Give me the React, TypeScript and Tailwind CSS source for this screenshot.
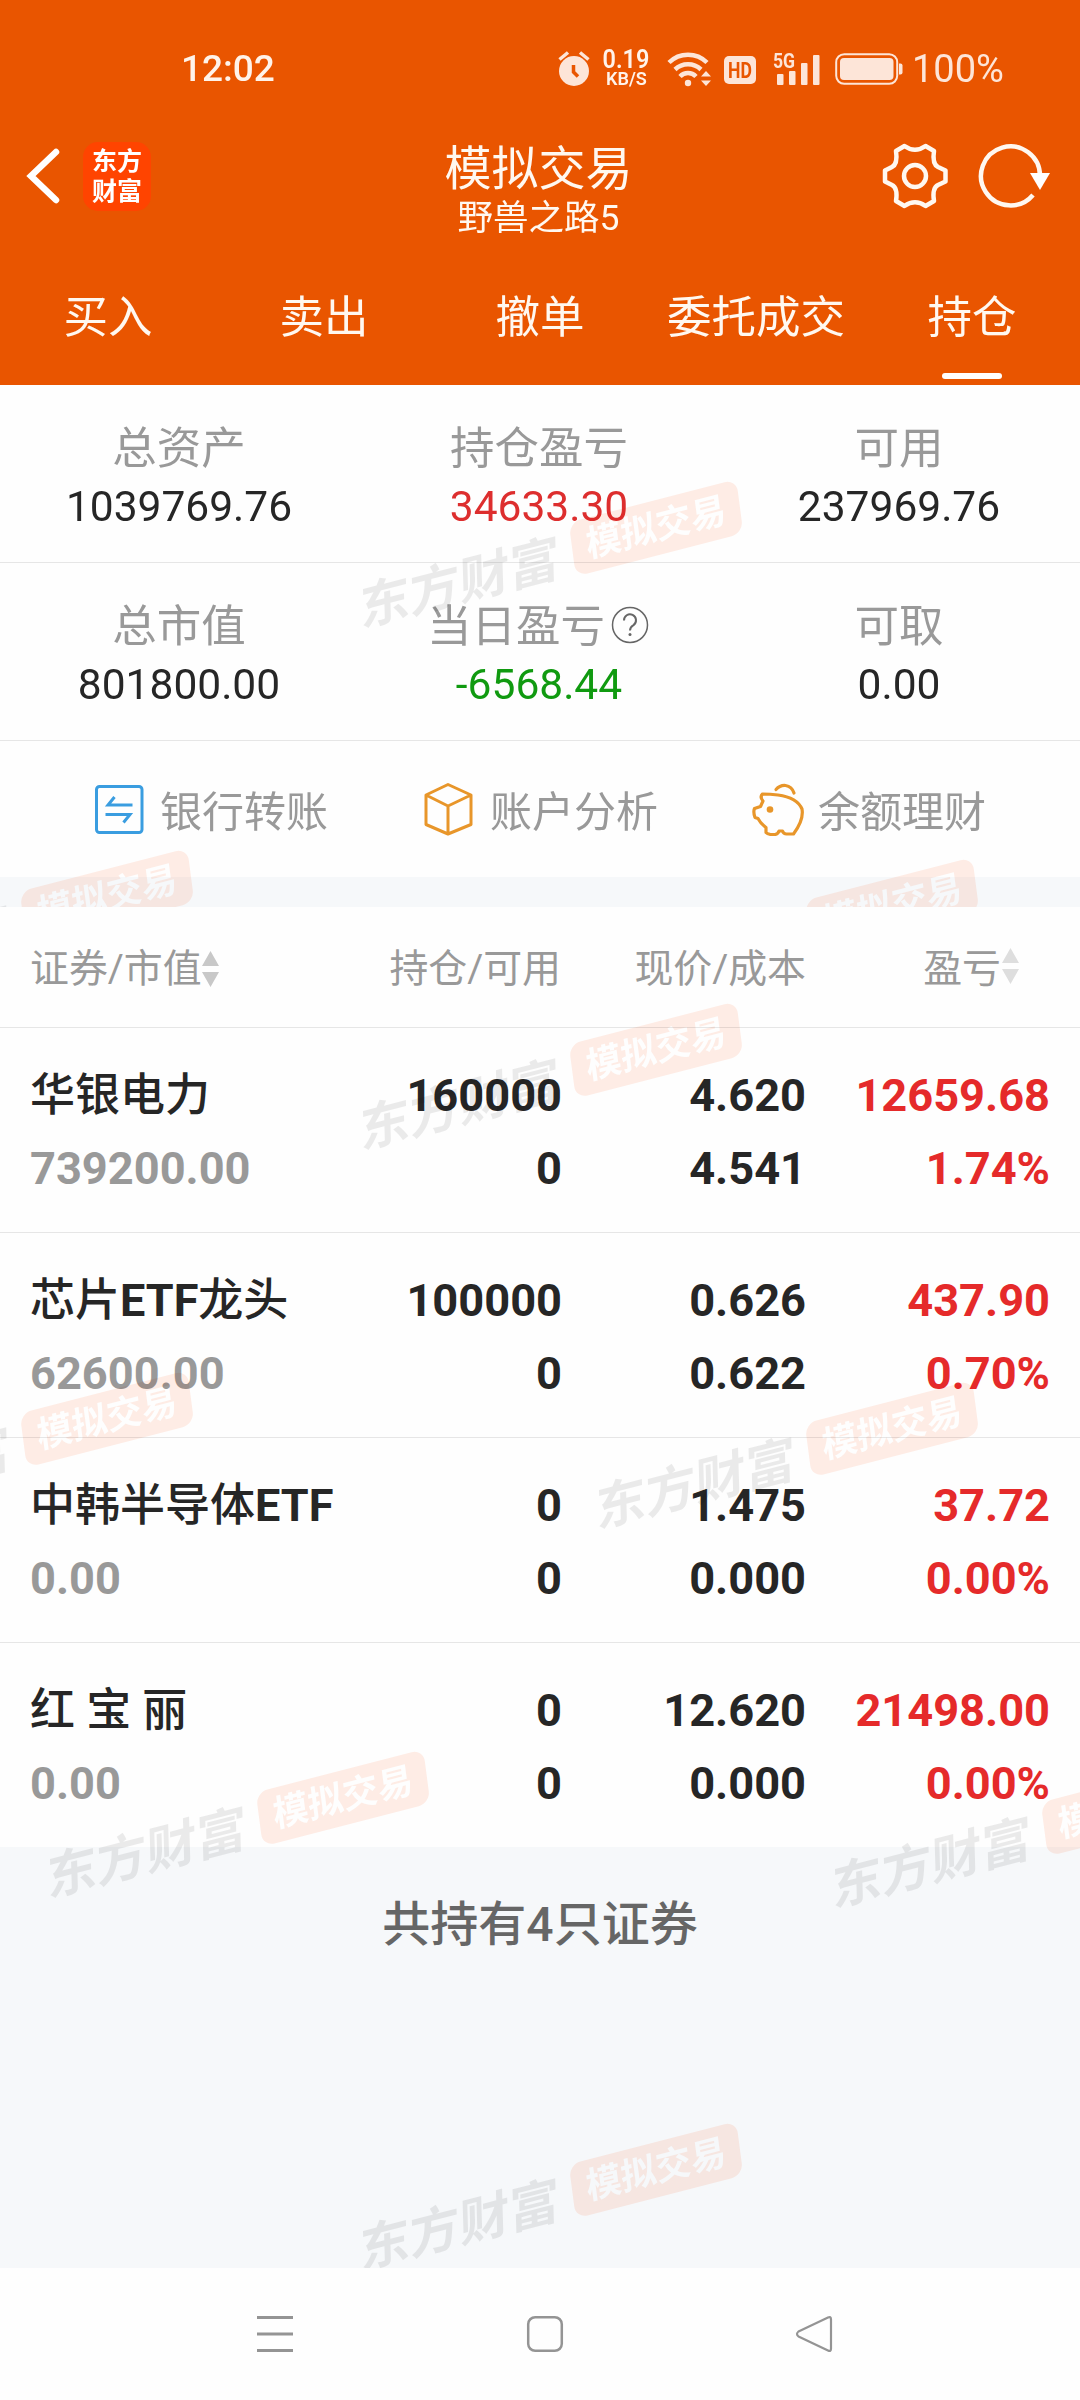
const tabs = ['买入', '卖出', '撤单', '委托成交', '持仓'];

const stats = [
  [
    { label: '总资产', value: '1039769.76', color: 'text-[#262626]' },
    { label: '持仓盈亏', value: '34633.30', color: 'text-[#dd2e2e]' },
    { label: '可用', value: '237969.76', color: 'text-[#262626]' },
  ],
  [
    { label: '总市值', value: '801800.00', color: 'text-[#262626]' },
    { label: '当日盈亏', value: '-6568.44', color: 'text-[#109a10]', help: true },
    { label: '可取', value: '0.00', color: 'text-[#262626]' },
  ],
];

const holdings = [
  { name: '华银电力', market: '739200.00', amount: '160000', usable: '0', price: '4.620', cost: '4.541', profit: '12659.68', rate: '1.74%' },
  { name: '芯片ETF龙头', market: '62600.00', amount: '100000', usable: '0', price: '0.626', cost: '0.622', profit: '437.90', rate: '0.70%' },
  { name: '中韩半导体ETF', market: '0.00', amount: '0', usable: '0', price: '1.475', cost: '0.000', profit: '37.72', rate: '0.00%' },
  { name: '红 宝 丽', market: '0.00', amount: '0', usable: '0', price: '12.620', cost: '0.000', profit: '21498.00', rate: '0.00%' },
];

// centre points, relative to the panel that holds them
const summaryMarks = [
  { x: 551, y: 170 },
  { x: 2, y: 539 },
  { x: 787, y: 539 + 9 },
];

const listMarks = [
  { x: 551, y: 170 },
  { x: 2, y: 539 },
  { x: 787, y: 549 },
  { x: 238, y: 918 },
  { x: 1023, y: 928 },
  { x: 551, y: 1290 },
];

function Watermarks({ marks }: { marks: { x: number; y: number }[] }) {
  return (
    <div className="pointer-events-none absolute inset-0 overflow-hidden mix-blend-multiply">
      {marks.map((mark) => (
        <div
          key={`${mark.x}-${mark.y}`}
          className="absolute w-[390px] -translate-x-1/2 -translate-y-1/2"
          style={{ left: mark.x, top: mark.y }}
        >
          <div className="flex items-center justify-between [transform:rotate(-14.5deg)_skewX(-7deg)]">
            <span className="mt-[10px] -ml-[3px] origin-left text-[50px] leading-[54px] font-bold whitespace-nowrap text-black/8 [transform:skewX(-6deg)_scaleX(1.03)]">
              东方财富
            </span>
            <span className="flex h-[54px] w-[173px] items-center justify-center rounded-[12px] bg-[#ff5a1e]/11 text-[36px] leading-[54px] font-bold text-white">
              模拟交易
            </span>
          </div>
        </div>
      ))}
    </div>
  );
}

function StatusBar() {
  return (
    <div className="flex h-[138px] items-center pl-[181px] text-[#fff3ea]">
      <span className="w-[377px] text-[37px] font-medium">12:02</span>
      <svg className="h-[36px] w-[32px]" viewBox="0 0 32 36" fill="none">
        <circle cx="16" cy="20" r="15" fill="#fde5d8" />
        <path d="M1.500 8.500l8.500-7M30.500 8.500l-8.500-7" stroke="#fde5d8" strokeWidth="3.500" />
        <path d="M15.500 14v7l4.500 4.500" stroke="#e95500" strokeWidth="3.500" />
      </svg>
      <div className="ml-[12px] flex w-[48px] flex-col items-center font-semibold">
        <span className="origin-bottom scale-x-90 text-[26px] leading-[20px]">0.19</span>
        <span className="scale-x-95 text-[19px] leading-[20px]">KB/S</span>
      </div>
      <svg className="ml-[17px] h-[36px] w-[46px]" viewBox="0 0 46 36" fill="none">
        <path d="M2 11.500a27 27 0 0 1 38 0" stroke="#fde5d8" strokeWidth="4.500" />
        <path d="M8 18.500a19 19 0 0 1 26 0" stroke="#fde5d8" strokeWidth="4.500" />
        <path d="M13 25.500a11 11 0 0 1 16 0" stroke="#fde5d8" strokeWidth="4.500" />
        <circle cx="21" cy="32" r="3.200" fill="#fde5d8" />
        <path d="M39 20l5 5.500H34zM39 35l5-5.500H34z" fill="#fde5d8" />
      </svg>
      <span className="mt-[2px] ml-[11px] flex h-[28px] w-[32px] items-center justify-center rounded-[5px] bg-[#fde5d8] text-[22px] font-bold text-[#e95500]">
        <span className="scale-x-80">HD</span>
      </span>
      <div className="ml-[17px] flex h-[33px] w-[47px] items-start">
        <span className="-mt-[2px] w-0 text-[20px] leading-[20px] font-bold text-[#fde5d8]">
          <span className="inline-block origin-left scale-x-88">5G</span>
        </span>
        <svg className="h-[33px] w-[47px]" viewBox="0 0 47 33" fill="#fde5d8">
          <rect x="4" y="21" width="6.500" height="11" rx="1" />
          <rect x="16" y="18" width="6.500" height="14" rx="1" />
          <rect x="28" y="10" width="6.500" height="22" rx="1" />
          <rect x="40" y="2" width="6.500" height="30" rx="1" />
        </svg>
      </div>
      <svg className="ml-[15px] h-[32px] w-[68px]" viewBox="0 0 68 32" fill="none">
        <rect x="1.200" y="1.200" width="61" height="29.600" rx="8" stroke="#fde5d8" strokeWidth="2" />
        <rect x="5" y="5" width="53.500" height="22" rx="4" fill="#fde5d8" />
        <path d="M64 10.500h1.500q2 0 2 2v7q0 2-2 2H64z" fill="#fde5d8" />
      </svg>
      <span className="ml-[9px] text-[38px] text-[#fde5d8]">100%</span>
    </div>
  );
}

function Header() {
  return (
    <header className="flex h-[385px] flex-col bg-[#e95500] text-[#fff8f0]">
      <StatusBar />
      <div className="flex h-[111px] justify-between pr-[28px] pl-[25px]">
        <div className="flex w-[200px] pt-[4px]">
          <svg className="mt-[6px] h-[56px] w-[36px]" viewBox="0 0 36 56" fill="none">
            <path d="M31 4L6 28l25 24" stroke="#fff" strokeWidth="6.500" strokeLinecap="round" />
          </svg>
          <div className="ml-[22px] flex h-[69px] w-[68px] flex-col items-center justify-center rounded-[15px] bg-[#ff4400] text-[25px] leading-[30px] font-bold text-white">
            <span>东方</span>
            <span>财富</span>
          </div>
        </div>
        <div className="flex flex-col items-center pt-[2px]">
          <h1 className="text-[47px] leading-[58px]">模拟交易</h1>
          <p className="text-[35.500px] leading-[40px]">野兽之路5</p>
        </div>
        <div className="flex w-[200px] justify-end pt-[4px]">
          <svg className="h-[68px] w-[68px]" viewBox="0 0 68 68" fill="none" stroke="#fff8f0" strokeWidth="4.500" strokeLinejoin="round">
            <path d="M22.500 4L14 9Q16 22 10 25L3 28.500V39.500L10 43Q16 46 14 59L22.500 64Q33 56.500 43.500 64L52 59Q50 46 56 43L63.500 39.500V28.500L56 25Q50 22 52 9L43.500 4Q33 11.500 22.500 4Z" />
            <circle cx="33" cy="34" r="11" />
          </svg>
          <svg className="ml-[28px] h-[68px] w-[74px]" viewBox="0 0 74 68" fill="none">
            <path d="M62 34A29.500 29.500 0 1 0 55 53" stroke="#fff8f0" strokeWidth="4.500" />
            <path d="M52 31h20L62 48z" fill="#fff" />
          </svg>
        </div>
      </div>
      <nav className="grid flex-1 grid-cols-5">
        {tabs.map((tab) => (
          <div key={tab} className="flex flex-col items-center justify-between pb-[6px] text-[44.500px]">
            <span className="mt-[36px] leading-[66px]">{tab}</span>
            {tab === '持仓' && <span className="h-[6px] w-[60px] rounded-full bg-white" />}
          </div>
        ))}
      </nav>
    </header>
  );
}

function Summary() {
  return (
    <section className="relative flex h-[522px] flex-col bg-[#fefefe]">
      {stats.map((row, i) => (
        <div key={i} className="grid h-[178px] grid-cols-3 border-b border-[#e6e6e6] pt-[34px] text-center">
          {row.map((item) => (
            <div key={item.label} className="-ml-[2px]">
              <div className="flex h-[60px] items-center justify-center text-[44.500px] leading-[60px] text-[#999]">
                {item.label}
                {item.help && (
                  <svg className="mr-[2px] mb-[5px] ml-[6px] h-[38px] w-[38px]" viewBox="0 0 38 38" fill="none" stroke="#666">
                    <circle cx="19" cy="19" r="17.500" strokeWidth="1.500" />
                    <path d="M13 14.500a6 6 0 1 1 9.500 4.600q-3.500 2-3.500 5.400" strokeWidth="2" />
                    <circle cx="19" cy="28.500" r="1.500" fill="#666" stroke="none" />
                  </svg>
                )}
              </div>
              <div className={`text-[42.500px] leading-[56px] ${item.color}`}>{item.value}</div>
            </div>
          ))}
        </div>
      ))}
      <div className="flex h-[136px] items-center text-[42px] text-[#999]">
        <div className="flex w-[329px] items-center pl-[94px]">
          <svg className="mr-[16px] h-[50px] w-[50px] shrink-0" viewBox="0 0 50 50" fill="none" stroke="#3a9de0" strokeWidth="3">
            <rect x="2.500" y="2.500" width="45.500" height="46" rx="3" />
            <path d="M38.500 21H14l6.500-8M11.500 30.500H36l-6.500 8" />
          </svg>
          <span className="mt-[6px] whitespace-nowrap">银行转账</span>
        </div>
        <div className="flex w-[327px] items-center pl-[94px]">
          <svg className="mr-[17px] h-[54px] w-[50px] shrink-0" viewBox="0 0 50 54" fill="none" stroke="#e8962a" strokeWidth="3" strokeLinejoin="round">
            <path d="M25 2.500L48 13v29.500L25 52 3 42.500V13zM3 13l22 11 23-11M25 24v28" />
          </svg>
          <span className="mt-[6px] whitespace-nowrap">账户分析</span>
        </div>
        <div className="flex items-center pl-[94px]">
          <svg className="mr-[14px] h-[54px] w-[54px] shrink-0" viewBox="0 0 54 54" fill="none" stroke="#e8962a" strokeWidth="3.200" strokeLinejoin="round" strokeLinecap="round">
            <path d="M12.500 12Q20 12 28 13Q47 15.500 52 27Q54 38 43.500 52H36.500Q33.500 52 32.500 49H29Q28 52 25 52.500Q18 53 16 50.500V45.500Q11 42 8 36.500L5 35.500Q3 30 4.500 26.500L10.500 24.500L13 19Q9.500 15 12.500 12Z" />
            <path d="M26 7.500Q30 3 35.500 3.500Q42 4.500 44 11" />
            <circle cx="20" cy="27.500" r="3.300" fill="#e8962a" stroke="none" />
          </svg>
          <span className="mt-[6px] whitespace-nowrap">余额理财</span>
        </div>
      </div>
      <div className="flex-1 bg-[#f6f8fa]" />
      <Watermarks marks={summaryMarks} />
    </section>
  );
}

function SortIcon({ className }: { className?: string }) {
  return (
    <svg className={`h-[36px] w-[17px] ${className}`} viewBox="0 0 17 36" fill="currentColor">
      <path d="M8.500 0L17 15H0zM8.500 36L17 21H0z" />
    </svg>
  );
}

function Holdings() {
  return (
    <section className="relative h-[1361px] bg-[#f6f8fa]">
      <div className="grid h-[121px] grid-cols-[300px_261px_245px_274px] items-center border-b border-[#e6e6e6] bg-[#fefefe] pt-[4px] text-right text-[38.900px] text-[#999]">
        <div className="flex items-center pl-[30px]">
          证券/市值
          <SortIcon className="text-[#c8c8c8]" />
        </div>
        <div>持仓/可用</div>
        <div>现价/成本</div>
        <div className="flex items-center justify-end pr-[61px]">
          盈亏
          <SortIcon className="mb-[5px] ml-px text-[#dedede]" />
        </div>
      </div>
      {holdings.map((item, i) => (
        <div
          key={item.name}
          className={`grid grid-cols-[380px_182px_244px_244px] bg-[#fefefe] pt-[31px] text-right text-[45.200px] leading-[73px] font-bold text-[#262626] ${
            i < holdings.length - 1 ? 'h-[205px] border-b border-[#e6e6e6]' : 'h-[204px]'
          }`}
        >
          <div className="pl-[30px] text-left">
            <div className="text-[45px] font-medium whitespace-pre">
              {item.name.split('ETF')[0]}
              {item.name.includes('ETF') && <span className="font-bold">ETF</span>}
              {item.name.split('ETF')[1]}
            </div>
            <div className="text-[#999]">{item.market}</div>
          </div>
          <div>
            <div>{item.amount}</div>
            <div>{item.usable}</div>
          </div>
          <div>
            <div>{item.price}</div>
            <div>{item.cost}</div>
          </div>
          <div className="text-[#e52a2a]">
            <div>{item.profit}</div>
            <div>{item.rate}</div>
          </div>
        </div>
      ))}
      <p className="pt-[43px] text-center text-[48px] leading-[70px] font-medium text-[#666]">共持有4只证券</p>
      <Watermarks marks={listMarks} />
    </section>
  );
}

function SystemNav() {
  return (
    <footer className="flex h-[132px] items-center justify-between bg-[#fefefe] px-[255px]">
      <svg className="h-[40px] w-[40px]" viewBox="0 0 40 40" stroke="#949494" strokeWidth="3">
        <path d="M2 3.500h36M2 20h36M2 36.500h36" />
      </svg>
      <svg className="h-[40px] w-[40px]" viewBox="0 0 40 40" fill="none" stroke="#949494" strokeWidth="2.500">
        <rect x="3.200" y="3.200" width="33.600" height="33.600" rx="7" />
      </svg>
      <svg className="-mr-[10px] h-[40px] w-[40px]" viewBox="0 0 40 40" fill="none" stroke="#949494" strokeWidth="2.200" strokeLinejoin="round">
        <path d="M33 3.500Q36 2 36 5.500v29Q36 38 33 36.500L3.500 22.500Q0.500 20 3.500 17.500Z" />
      </svg>
    </footer>
  );
}

export default function App() {
  return (
    <div className="h-[2400px] w-[1080px] overflow-hidden bg-[#fefefe] font-['Roboto','Noto_Sans_CJK_SC',sans-serif]">
      <Header />
      <Summary />
      <Holdings />
      <SystemNav />
    </div>
  );
}
